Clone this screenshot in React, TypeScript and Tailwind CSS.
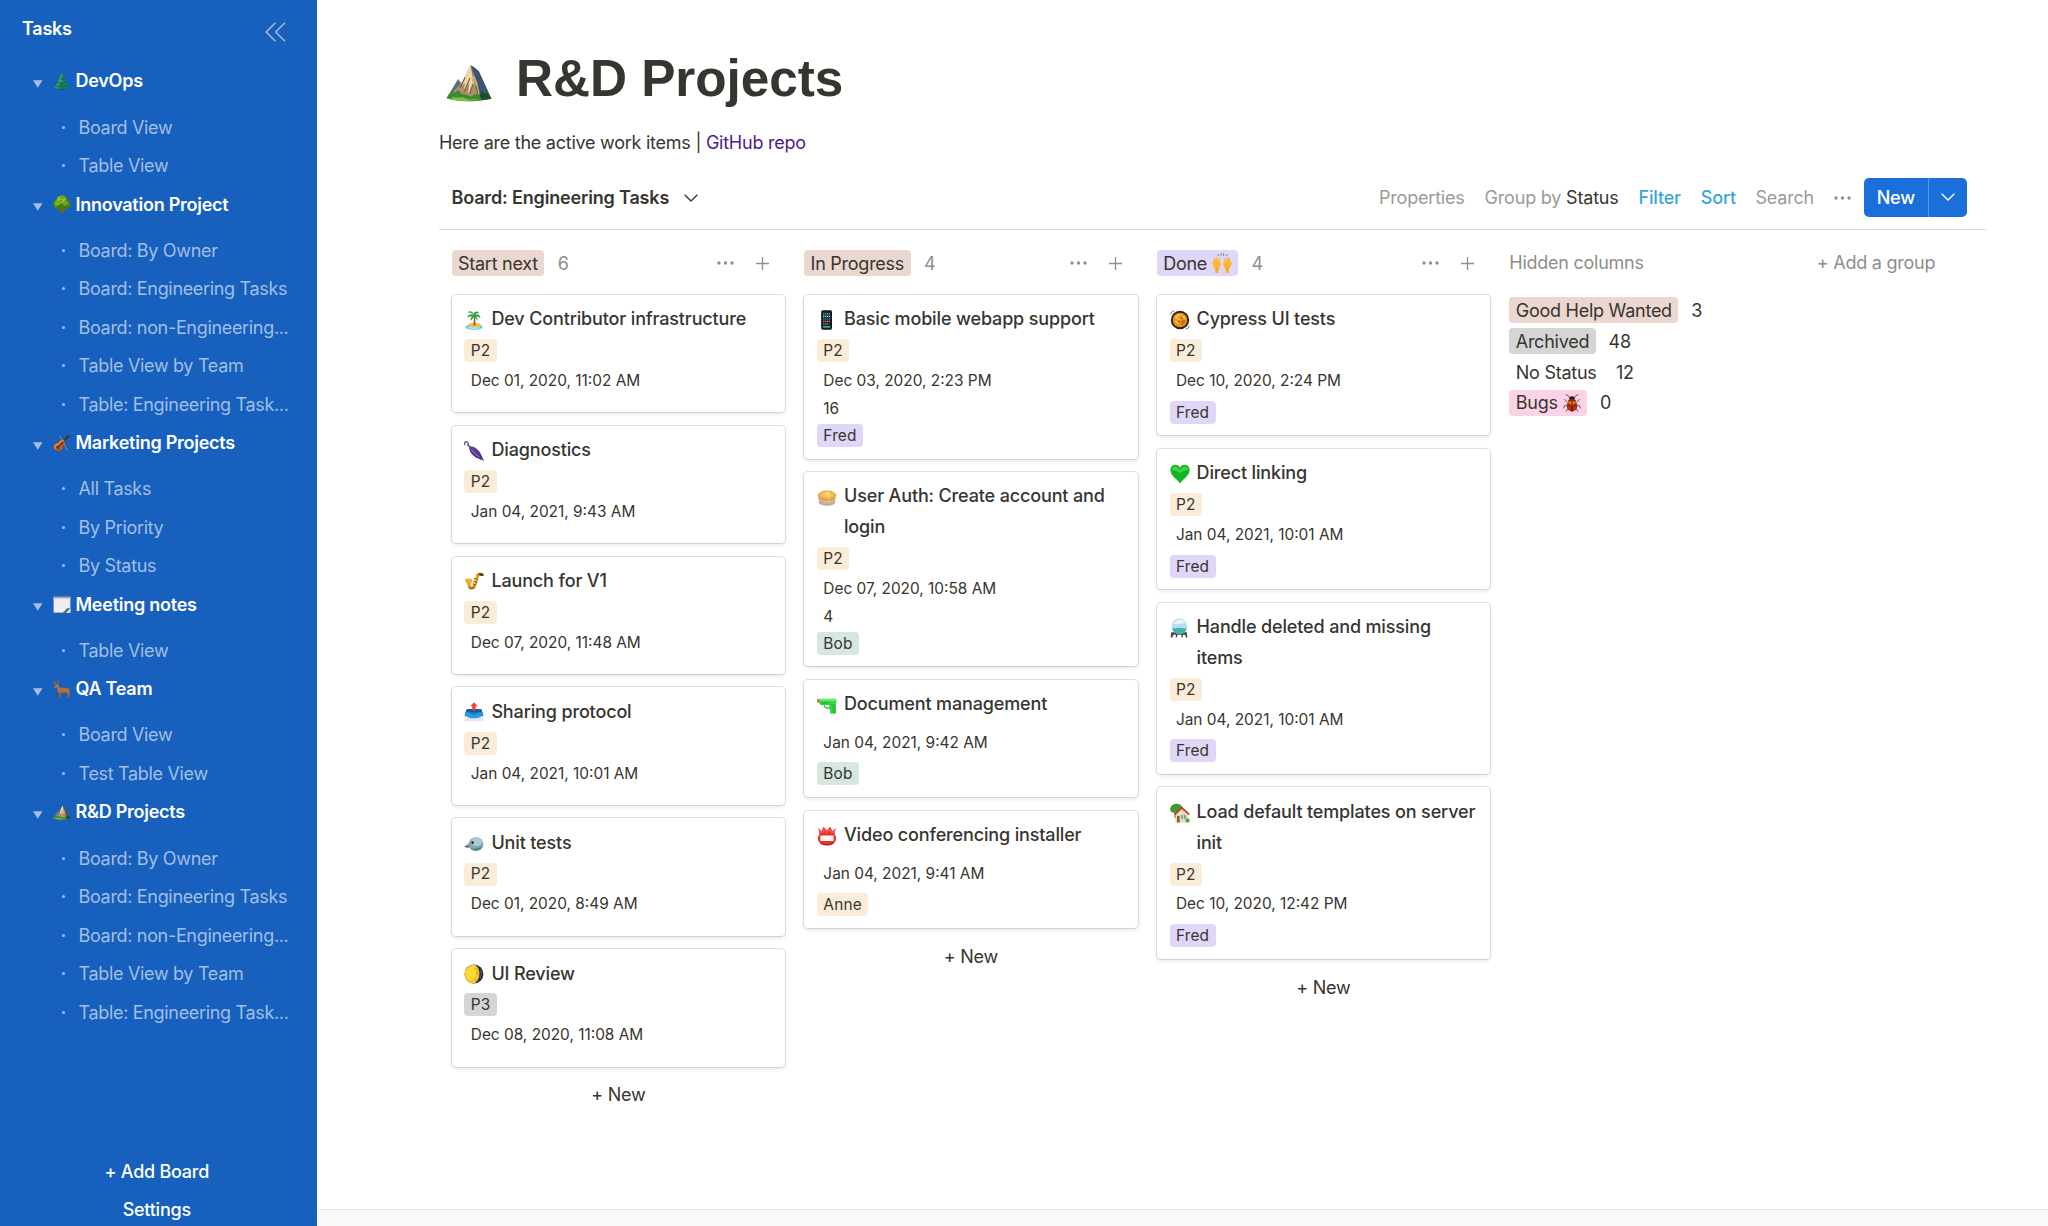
import React from "react";

type IconProps = { className?: string };

const Svg = ({ className = "", children }: React.PropsWithChildren<IconProps>) => (
  <svg viewBox="0 0 24 24" className={"block shrink-0 " + className} fill="none">
    {children}
  </svg>
);

const Pine = (p: IconProps) => (
  <Svg {...p}>
    <path d="M10.500 19.500h3v4.200h-3z" fill="#4a2d18" />
    <path d="M12 .3 8.300 7l1.200-.1-3.300 5.600 1.200-.1-3.200 5 1-.1L1.500 21.500c3.500 1 7 .8 10.500.8s7 .2 10.500-.8L18.800 17.300l1 .1-3.200-5 1.200.1L14.500 6.900l1.200.1z" fill="#178257" />
    <path d="M12 .3 8.300 7l1.200-.1-3.300 5.600 1.200-.1-3.200 5 1-.1L1.500 21.500l4.500.6L12 12z" fill="#33a06a" />
    <path d="m9 8.500 3 1.300 3-1M7 14l5 1.500 4.500-2M4.500 19.500 9 18l3 1.800 4-1.600 3.500 1.600" stroke="#0d5540" strokeWidth="1" />
  </Svg>
);

const RoundTree = (p: IconProps) => (
  <Svg {...p}>
    <path d="M10.300 16h3.400l.8 8h-5z" fill="#8a5826" />
    <circle cx="12" cy="7.500" r="7.300" fill="#5a9a14" />
    <circle cx="6.500" cy="12" r="6" fill="#4f8f10" />
    <circle cx="17.500" cy="12" r="6" fill="#47830e" />
    <ellipse cx="12" cy="16" rx="7.500" ry="4.500" fill="#447d0d" />
    <ellipse cx="11" cy="6.500" rx="6" ry="4.800" fill="#8cc126" />
    <circle cx="6" cy="11" r="3.600" fill="#79b01e" />
    <circle cx="16.500" cy="11" r="3.500" fill="#6da41a" />
    <path d="M6 15c2-2 3 1 5-1m2 3c1-2 3 0 5-3M8 9c1-1.500 2.500 0 4-1.500M10 4c1-1 2 .5 4-.5" stroke="#2f660b" strokeWidth="1" />
  </Svg>
);

const Violin = (p: IconProps) => (
  <Svg {...p}>
    <path d="M9 2.500 19.500 22" stroke="#a58f83" strokeWidth="1.100" />
    <path d="m13 11 8-8.500" stroke="#3d2a22" strokeWidth="2.200" />
    <path d="m20 1.500 2.500 2.200" stroke="#5b3726" strokeWidth="1.800" />
    <path d="M9.500 8.500c2-1.500 4.500-1.200 5.700.2s1 3.300-.4 4.800c-1.300 1.400-1 2.200-1.200 3.800-.3 3-4 5.200-7.600 5S.6 19.600 1 16.800c.4-2.900 2.600-4.200 4.800-4.500 2.500-.3 1.700-2.300 3.700-3.800z" fill="#c0561f" />
    <path d="M9.500 8.500c2-1.500 4.500-1.200 5.700.2l-12 11.500C1.500 19.500.7 18.500 1 16.800c.4-2.900 2.600-4.200 4.800-4.500 2.500-.3 1.700-2.300 3.700-3.800z" fill="#dd7b35" />
    <path d="m5 19 8.500-8.500" stroke="#4b2313" strokeWidth="1.500" />
    <path d="m4.500 16.500 3 3" stroke="#33180d" strokeWidth="1.200" />
  </Svg>
);

const Notepad = (p: IconProps) => (
  <Svg {...p}>
    <path d="M.8 2.500h22.400v21H.8z" fill="#eceef2" />
    <path d="M.8 2.500h22.400v2.300H.8z" fill="#b9bec6" />
    <path d="M3 .8v3M6 .8v3M9 .8v3M12 .8v3M15 .8v3M18 .8v3M21 .8v3" stroke="#7c838e" strokeWidth="1.100" />
    <path d="M23.200 15.500c-1 2.800-2.700 2-5.200 2.500-1 2.500-2.500 3.500-5 5.500h4c3.500-1.500 5.500-4.500 6.200-8z" fill="#56645a" />
    <path d="M23.200 18 17.500 23.500h5.700z" fill="#dfe8f5" />
  </Svg>
);

const Deer = (p: IconProps) => (
  <Svg {...p}>
    <path d="M5 7C2.500 5 2.500 3 1.500 1M3 4 .8 3.500M6 6.500C6.500 4 5.500 2.500 7 .5M6.300 4l2-1.500" stroke="#a77347" strokeWidth="1.100" />
    <path d="M1.500 8.500 5 5.800l2.500.5 1.500 4c3 .6 8-.6 12 .7l1.800 3-1.300-.4c.3 2 1 3.400.2 5.400l-.5 4.500h-1.400l.1-4.500-2.600-2.700c-2.500.9-4 .7-6.300.3l-1.500 2.500.3 4.400H8.400l-.3-5c-2-2.500-2.300-5-2.800-8.500l-3.300.2z" fill="#b76c39" />
    <path d="m7.500 17-.8 6.500M17 17l.7 6.500" stroke="#7d4420" strokeWidth="1.400" />
  </Svg>
);

const Mountain = (p: IconProps) => (
  <Svg {...p}>
    <path d="m.3 20.500 6-10 2 2 4.500-9.200 4 3 6.900 14.500C16 22.500 8 22.500.3 20.500z" fill="#a88f6d" />
    <path d="m12.800 3.300 1.600.8 2.800 2.300 6.500 14.400-4.500.3-3-5-1-4.500z" fill="#3c566f" />
    <path d="m12.800 3.300-3.300 6.500L8 14l2-1.500-.8 4 3-4-.7 6 3-5.500z" fill="#f0d6a5" />
    <path d="m12.800 3.300 1.700 5-1 3 2 2 .5 4 1.800 2.500-1.300-7z" fill="#c9a57a" />
    <path d="m12.500 10-3 7M14 13l-1.500 5M10 9.500 7.500 15M15.500 14l1 4" stroke="#77603f" strokeWidth=".6" />
    <path d="m6.300 10.500-4 6.700 2-.7L7.500 13z" fill="#587184" />
    <path d="M.3 20.500c1-2.200 2-3.500 3-4l1.500 1 1.500-1.300 2 2 2.500.4 2 1 3-1.300 2.500.2 1.700-2 3.500 4.300C16 22.500 8 22.500.3 20.500z" fill="#3f8a2c" />
    <path d="M4 19.500c2 1.500 4-.5 6 1s5 0 7 .5l-6 1.100c-4 0-6-.4-9-1z" fill="#79c04a" />
    <path d="m17.500 19 1.500-2.500 1.200 1.500 1-.8 2.500 3.600-5 .6z" fill="#1d4a36" />
  </Svg>
);

const Island = (p: IconProps) => (
  <Svg {...p}>
    <ellipse cx="12" cy="20.500" rx="10.500" ry="3.300" fill="#46d5ee" />
    <ellipse cx="12" cy="21.200" rx="7" ry="1.600" fill="#9ef0f6" />
    <ellipse cx="12.500" cy="18.200" rx="8" ry="2.900" fill="#f5bd58" />
    <path d="M11.200 7c1 4 .5 8 0 11.500h2.400C14 14.500 13.500 10 12.600 6.500z" fill="#8d5a2f" />
    <path d="M12 6C8 4 5 5.500 3.800 9.500 6 7.800 8 7.500 10 8c-2 1-2.500 3-2 5 1.400-1 3-3 4-5.500 1 2 3 3 4 5.200.7-2 0-4-1.800-5 2 0 4 .6 5.600 2.300C19.500 6.500 16.500 4.500 13 5.500c1.500-1.500 3.500-2 5.500-1.500-2-3-5.500-3-7 .5C9.500 1 6.500 1 4.500 3c3-.5 5.500.8 7.500 3z" fill="#2f9e3f" />
  </Svg>
);

const Umbrella = (p: IconProps) => (
  <Svg {...p}>
    <path d="M4.500 5.500C6 3.500 4.500.8 2.500 1S-.2 3.500 1.500 4.500" stroke="#7655a8" strokeWidth="1.800" />
    <path d="m4.500 4.500 3 3" stroke="#4b3769" strokeWidth="1.600" />
    <path d="M6 6.500c3-.8 8 1 11.500 5 3 3.400 3.800 7 6 12-5-1.800-9-2.500-12.500-6C7.500 14 6.200 10 6 6.500z" fill="#6d46a4" />
    <path d="M7.500 7.500c3 3.500 9 6.500 16 16M7 9c1 5 6 9.500 14 13M11 7.500c4 3 7 7 10 12" stroke="#412368" strokeWidth="1.100" />
    <path d="M8.500 9.500c3 4 6 6.500 10 10" stroke="#a27fd2" strokeWidth="1" />
  </Svg>
);

const Sax = (p: IconProps) => (
  <Svg {...p}>
    <path d="M22 3c-3-1-5-.5-6 1.500L12.500 16.500c-1 3.500-6 3.500-6.200 0L6 12" stroke="#d8931a" strokeWidth="3.800" />
    <path d="M.8 9.500c2.500-2 6.500-2.300 9.500-.5L8.500 13.500c.5 2-1.500 4-4 2.500z" fill="#efaf2c" />
    <path d="m15 5-3.300 11" stroke="#ffd76a" strokeWidth="1.500" />
    <path d="m17.500 1.500 6 .5v2.800l-4.500-.7z" fill="#3d3226" />
    <path d="m12 7.500 5 1.500M11 11l5 1.500M10.500 14.500l4 1" stroke="#84510b" strokeWidth="1.100" />
    <path d="M5.500 18.500c2 2.200 5.500 1.800 7.500-.3" stroke="#875509" strokeWidth="1.200" />
  </Svg>
);

const Outbox = (p: IconProps) => (
  <Svg {...p}>
    <path d="M3 9h18l2.500 8H.5z" fill="#1f7fcb" />
    <path d="M3.500 8.500h17l1.500 4H2z" fill="#165d99" />
    <path d="M.5 16.500 3 18h18l2.500-1.500v6.700H.5z" fill="#e6e8eb" />
    <path d="M.8 12.500h6.400c.8 2.400 2.500 3.200 4.800 3.200s4-.8 4.800-3.200h6.400L20 18l-4 1.500H8L4 18z" fill="#2b9ae6" />
    <path d="m12 .3 4.500 4.900h-2.400V10H9.900V5.200H7.500z" fill="#f0433d" />
  </Svg>
);

const Bird = (p: IconProps) => (
  <Svg {...p}>
    <path d="M7.500 11 .8 15.500c-.5 1 .5 1.800 2 1.800l6 .7z" fill="#9ba6ad" />
    <path d="m1 15.800 7-.8.8 1.500-6 .8z" fill="#58646b" />
    <ellipse cx="14.500" cy="13.500" rx="8.700" ry="8.500" fill="#7fa8b0" />
    <ellipse cx="15.500" cy="10.500" rx="6.500" ry="5" fill="#a9cbd0" />
    <path d="M7.500 18c3 3 8 3.500 12 1l3-4c-3 3-10 5-15 3z" fill="#4f7d88" />
    <circle cx="10.500" cy="11.500" r="2.300" fill="#dce6e8" />
    <circle cx="10.300" cy="11.500" r="1.600" fill="#15191c" />
  </Svg>
);

const Moon = (p: IconProps) => (
  <Svg {...p}>
    <circle cx="12" cy="12" r="11.300" fill="#1f2d41" />
    <path d="M13.500.8C17 3.500 18.500 7.500 18.500 12s-2 8.500-6 11.300C6 23.500.7 18.500.7 12S6 .5 13.500.8z" fill="#fbc62b" />
    <path d="M11 1.500C5 3 2 7.500 2 12c0 3.500 1.500 6 3.500 8 3 0 8-3 8.500-8S13 3 11 1.500z" fill="#ffd935" />
    <path d="M14.500 5c-1 1-.5 2 .5 2.500M17 10c-2-1-2.500.5-1.500 2s2.500.7 3 0M12.500 18c.5 1.500 1.500 2 3 1" stroke="#d5961b" strokeWidth="1" />
    <path d="M20 7c1 3 .8 7-.5 10" stroke="#51617a" strokeWidth="1.200" />
  </Svg>
);

const Phone = (p: IconProps) => (
  <Svg {...p}>
    <rect x="5" y=".3" width="13" height="23.400" rx="2" fill="#101317" />
    <rect x="6.500" y="1.800" width="10" height="20.400" rx="1" fill="#122b38" />
    <path d="M7.300 4.500h8.400" stroke="#3dbd72" strokeWidth="1.500" strokeDasharray="1.500 .8" />
    <path d="M7.300 7.500h8.400" stroke="#d8dce0" strokeWidth="1.500" strokeDasharray="1.500 .8" />
    <path d="M7.300 10.500h8.400" stroke="#4e7bd9" strokeWidth="1.500" strokeDasharray="1.500 .8" />
    <path d="M7.300 13.500h8.400" stroke="#e0713f" strokeWidth="1.500" strokeDasharray="1.500 .8" />
    <path d="M7.300 16.500h6" stroke="#b55bce" strokeWidth="1.500" strokeDasharray="1.500 .8" />
    <path d="M7.300 20.300h8.400" stroke="#37b183" strokeWidth="2" />
  </Svg>
);

const Pancakes = (p: IconProps) => (
  <Svg {...p}>
    <ellipse cx="12" cy="18" rx="10" ry="4.500" fill="#b9aaa0" />
    <path d="M1 10h22l-1.500 7c-2 4.500-17 4.500-19 0z" fill="#e6cba0" />
    <path d="M1.500 13.500c4 4 17 4 21 0M2.300 16.500c4 3.800 15.500 3.800 19.400 0" stroke="#b88f5c" strokeWidth="1" />
    <ellipse cx="12" cy="10" rx="11" ry="5.800" fill="#dc9c4a" />
    <ellipse cx="12" cy="9.400" rx="9.700" ry="4.700" fill="#f3b954" />
    <path d="M7 8.500c2-2 8-2.500 10 0 1 2-1 3-2 3.500l.5 4c0 1-1.500 1-1.500 0l-.7-3.500C10 13 6 11 7 8.500z" fill="#f8cf58" />
    <path d="m10 7 3.500-.7 1.500 1.500-3.500 1z" fill="#fff0a0" />
  </Svg>
);

const WaterGun = (p: IconProps) => (
  <Svg {...p}>
    <path d="M2.500 4.500h20l1 2.500-1 4.500.5 11h-7L14.500 12H4L2.500 9.500z" fill="#35d64a" />
    <path d="M3 5h19.500l.6 2H3z" fill="#7af07a" />
    <path d="M0 5h2.800v4H0z" fill="#c9703a" />
    <path d="M8.500 12c.5 3.500 3.500 4.500 7 3.500" stroke="#27b23b" strokeWidth="1.500" />
    <path d="M5 9.500h9M17 12h5" stroke="#1c9c33" strokeWidth="1" />
    <path d="m18 14 1 7h3.500l-.5-8z" fill="#2bc13f" />
  </Svg>
);

const NameBadge = (p: IconProps) => (
  <Svg {...p}>
    <path d="M3 10 1.500 2.500 5.500 6 8 1l3.800 4.500L15.800 1l2.700 5 4-3.500L21 10c1.500 2 2 3.500 2 5 0 5-5 8.500-11 8.500S1 20 1 15c0-1.500.5-3 2-5z" fill="#e5352c" />
    <path d="M4 8 3 5l3.500 3L8.500 4l3.400 4 3.600-4 2.300 4L21 5l-1 3" stroke="#ff8178" strokeWidth="1" />
    <rect x="4" y="11.500" width="16" height="6.500" rx="1" fill="#f9f5f3" />
    <path d="M4 20.500c4 2.500 12 2.500 16 0" stroke="#a91713" strokeWidth="1.200" />
  </Svg>
);

const Hands = (p: IconProps) => (
  <Svg {...p}>
    <path d="M7 1.800 8 4M11 .5v2.700M14 .5v2.700M18 1.800 17 4" stroke="#7b6d78" strokeWidth="1.200" />
    <path d="M1 14.500c-.8-2.500-.6-4.500.2-5l1 2.500-.3-5.500c.2-1.500 1.500-1 1.700.3l.6 3.300.3-4.300c.2-1.300 1.600-1.200 1.800 0l.4 4.500 1-3.300c.5-1.300 1.900-.7 1.700.5l-.6 4.700c.7-1.200 2.200-.7 2 .5-.4 2.300-1.500 4.800-3.500 6.300l.5 5H3.600l.3-5C2.400 17.500 1.500 16 1 14.500z" fill="#fdb724" />
    <path d="M23 14.500c.8-2.500.6-4.500-.2-5l-1 2.500.3-5.500c-.2-1.500-1.500-1-1.700.3l-.6 3.300-.3-4.300c-.2-1.300-1.600-1.200-1.800 0l-.4 4.500-1-3.300c-.5-1.300-1.900-.7-1.700.5l.6 4.700c-.7-1.200-2.200-.7-2 .5.400 2.300 1.500 4.800 3.500 6.300l-.5 5h4.200l-.3-5c1.500-1.500 2.400-3 2.900-4.500z" fill="#fdb724" />
    <path d="M4 19.500h4M16 19.500h4" stroke="#e6922a" strokeWidth="1.400" />
  </Svg>
);

const Paella = (p: IconProps) => (
  <Svg {...p}>
    <path d="M1 5.500C1 3 2.500 1.500 5 1.200M23 18.500c0 2.500-1.500 4-4 4.300" stroke="#706c68" strokeWidth="1.200" />
    <circle cx="12" cy="12" r="11" fill="#242120" />
    <circle cx="12" cy="12" r="8.800" fill="#e8921a" />
    <path d="M6 8c2-3 6-4 9-2.500-1 2-4 1-5 3.500S6.500 12 6 8z" fill="#f8bd3b" />
    <path d="M14 13c1.500-1.500 4-1 4.500.5-1 3-2.500 4.500-5 4.500.5-2-.5-3 .5-5z" fill="#d9601a" />
    <path d="M6 14c2-1 3 1 4 3M15 7l3 3M9 12l3-1" stroke="#ffdf6e" strokeWidth="1.500" />
    <circle cx="10.500" cy="14" r="1" fill="#a3440f" />
    <circle cx="14" cy="9.500" r="1" fill="#c9540f" />
  </Svg>
);

const GreenHeart = (p: IconProps) => (
  <Svg {...p}>
    <path d="M12 23.500C10 19 .5 14.500.5 7.500.5 3.500 3 1 6.300 1 9 1 11 2.500 12 4.500 13 2.500 15 1 17.700 1c3.300 0 5.800 2.500 5.800 6.500 0 7-9.500 11.500-11.500 16z" fill="#13b521" />
    <path d="M2.500 6.500c.5-2.700 3-4 5-3.200 2 .7 3.500 2.700 4.500 4.200 1-1.500 2.500-3.500 4.500-4.200 2-.8 4.500.5 5 3.200-2 1-5 1-9.500 4.500-4.500-3.500-7.500-3.500-9.500-4.500z" fill="#3fd345" />
  </Svg>
);

const CrystalBall = (p: IconProps) => (
  <Svg {...p}>
    <path d="M1.500 17h18.500l1 6.500h-1.800l-1-3.500h-3l.5 3.500h-1.500l-.8-3.500H9l-.8 3.500H6.700l.5-3.500H4l-1 3.500H.7z" fill="#4a4245" />
    <circle cx="11.300" cy="9.800" r="9.300" fill="#b5dcf1" />
    <path d="M2.500 13c4-1.500 13-1.500 17.600 0-1 3.500-3.800 6.100-8.800 6.100S3.500 16.500 2.500 13z" fill="#3ab3ab" />
    <path d="M4 7c1.500-3 4-5 8-5 3 0 5.500 1.700 6.800 4.500C14 5 9 9 4 7z" fill="#eaf6fd" />
  </Svg>
);

const HouseTree = (p: IconProps) => (
  <Svg {...p}>
    <path d="M5.500 10h2v8h-2z" fill="#7b4b24" />
    <path d="M7.500.8c3 0 5 1 6 2.500C15.500 4 15 7 13.500 8.500 11 12 4 12.500 1.500 10.500-.5 8.500 0 5.500 1.500 4 2.500 2 5 .8 7.500.8z" fill="#3f9a2e" />
    <path d="M6.500 13 14 6l8 7.500v10H6.500z" fill="#efdcb6" />
    <path d="m5.500 14 8.700-8.300 9 8.300" stroke="#c93f31" strokeWidth="2.200" />
    <path d="M8.500 15.500h3v8h-3z" fill="#8c522c" />
    <path d="M13.500 14.500h5.500v4.500h-5.500z" fill="#5d9dc4" />
    <path d="M16.200 14.500V19" stroke="#fff" strokeWidth=".8" />
    <circle cx="21" cy="21" r="2.600" fill="#58ad2f" />
  </Svg>
);

const Beetle = (p: IconProps) => (
  <Svg {...p}>
    <path d="M9 5 6 1.500 3.500 1M15 5l3-3.500 2.500-.5M6 11 2 7M18 11l4-4M5 15.500H2L1 19M19 15.500h3l1 3.500M7 19l-3 4.500M17 19l3 4.500" stroke="#4b3a35" strokeWidth="1.100" />
    <path d="M8 6.500C8 4.500 9.500 3 12 3s4 1.500 4 3.500z" fill="#2b1c18" />
    <path d="M7 9c1.500-3.500 8.500-3.500 10 0l-1 2.500H8z" fill="#5a2b13" />
    <ellipse cx="12" cy="15.500" rx="7" ry="7.800" fill="#a82410" />
    <path d="M6.500 11c2-2 9-2 11 0-1.500 2-4 2-5.500 6-1.500-4-4-4-5.500-6z" fill="#e08a2a" />
    <path d="M12 9.500v13.800" stroke="#3d0d08" strokeWidth="1.300" />
    <path d="M8 17c.5 2 1.500 3 2.500 3.500M16 17c-.5 2-1.500 3-2.500 3.500" stroke="#e2602a" strokeWidth="1.200" />
  </Svg>
);

type Icon = (p: IconProps) => React.ReactElement;

const boards: { icon: Icon; name: string; views: string[] }[] = [
  { icon: Pine, name: "DevOps", views: ["Board View", "Table View"] },
  {
    icon: RoundTree,
    name: "Innovation Project",
    views: ["Board: By Owner", "Board: Engineering Tasks", "Board: non-Engineering...", "Table View by Team", "Table: Engineering Task..."],
  },
  { icon: Violin, name: "Marketing Projects", views: ["All Tasks", "By Priority", "By Status"] },
  { icon: Notepad, name: "Meeting notes", views: ["Table View"] },
  { icon: Deer, name: "QA Team", views: ["Board View", "Test Table View"] },
  {
    icon: Mountain,
    name: "R&D Projects",
    views: ["Board: By Owner", "Board: Engineering Tasks", "Board: non-Engineering...", "Table View by Team", "Table: Engineering Task..."],
  },
];

const personColor: Record<string, string> = {
  Fred: "bg-[#e0d6f8]",
  Bob: "bg-[#d6e6e1]",
  Anne: "bg-[#fbecd9]",
};

const priorityColor: Record<string, string> = {
  P2: "bg-[#fbecd9]",
  P3: "bg-[#d5d5d5]",
};

type Task = { icon: Icon; title: string[]; priority?: string; date: string; estimate?: string; person?: string };

const columns: { name: string; icon?: Icon; color: string; count: number; tasks: Task[] }[] = [
  {
    name: "Start next",
    color: "bg-[#ead7d0]",
    count: 6,
    tasks: [
      { icon: Island, title: ["Dev Contributor infrastructure"], priority: "P2", date: "Dec 01, 2020, 11:02 AM" },
      { icon: Umbrella, title: ["Diagnostics"], priority: "P2", date: "Jan 04, 2021, 9:43 AM" },
      { icon: Sax, title: ["Launch for V1"], priority: "P2", date: "Dec 07, 2020, 11:48 AM" },
      { icon: Outbox, title: ["Sharing protocol"], priority: "P2", date: "Jan 04, 2021, 10:01 AM" },
      { icon: Bird, title: ["Unit tests"], priority: "P2", date: "Dec 01, 2020, 8:49 AM" },
      { icon: Moon, title: ["UI Review"], priority: "P3", date: "Dec 08, 2020, 11:08 AM" },
    ],
  },
  {
    name: "In Progress",
    color: "bg-[#ead7d0]",
    count: 4,
    tasks: [
      { icon: Phone, title: ["Basic mobile webapp support"], priority: "P2", date: "Dec 03, 2020, 2:23 PM", estimate: "16", person: "Fred" },
      { icon: Pancakes, title: ["User Auth: Create account and", "login"], priority: "P2", date: "Dec 07, 2020, 10:58 AM", estimate: "4", person: "Bob" },
      { icon: WaterGun, title: ["Document management"], date: "Jan 04, 2021, 9:42 AM", person: "Bob" },
      { icon: NameBadge, title: ["Video conferencing installer"], date: "Jan 04, 2021, 9:41 AM", person: "Anne" },
    ],
  },
  {
    name: "Done",
    icon: Hands,
    color: "bg-[#e0d6f8]",
    count: 4,
    tasks: [
      { icon: Paella, title: ["Cypress UI tests"], priority: "P2", date: "Dec 10, 2020, 2:24 PM", person: "Fred" },
      { icon: GreenHeart, title: ["Direct linking"], priority: "P2", date: "Jan 04, 2021, 10:01 AM", person: "Fred" },
      { icon: CrystalBall, title: ["Handle deleted and missing", "items"], priority: "P2", date: "Jan 04, 2021, 10:01 AM", person: "Fred" },
      { icon: HouseTree, title: ["Load default templates on server", "init"], priority: "P2", date: "Dec 10, 2020, 12:42 PM", person: "Fred" },
    ],
  },
];

const hidden: { name: string; icon?: Icon; color: string; count: number }[] = [
  { name: "Good Help Wanted", color: "bg-[#ead7d0]", count: 3 },
  { name: "Archived", color: "bg-[#d5d5d5]", count: 48 },
  { name: "No Status", color: "", count: 12 },
  { name: "Bugs", icon: Beetle, color: "bg-[#fad3e6]", count: 0 },
];

function Dots() {
  return (
    <svg viewBox="0 0 17 4" className="block h-[4px] w-[17px] fill-[#8f8e8b]">
      <circle cx="2" cy="2" r="1.700" />
      <circle cx="8.500" cy="2" r="1.700" />
      <circle cx="15" cy="2" r="1.700" />
    </svg>
  );
}

function ChevronDown({ className }: IconProps) {
  return (
    <svg viewBox="0 0 14 8" className={"block h-[8px] w-[14px] " + className} fill="none" strokeWidth="1.300">
      <path d="m.7.7 6.300 6.300 6.300-6.300" />
    </svg>
  );
}

function Badge({ color, children }: React.PropsWithChildren<{ color: string }>) {
  return (
    <span className={"flex h-[25.700px] items-center rounded-[4px] px-[6.400px] " + color}>{children}</span>
  );
}

function Chip({ color, children }: React.PropsWithChildren<{ color: string }>) {
  return (
    <div className="flex h-[30.800px] items-center tracking-[0.01em]">
      <span className={"flex h-[23px] items-center rounded-[4px] px-[6.400px] " + color}>{children}</span>
    </div>
  );
}

function Card({ task }: { task: Task }) {
  const TaskIcon = task.icon;
  return (
    <div className="rounded-[4px] bg-white pt-[9.600px] pb-[7.900px] pl-[12.800px] text-[15.400px] tracking-[0em] shadow-[0_0_0_1px_rgba(15,15,15,0.12),0_2px_4px_rgba(15,15,15,0.1)]">
      <div className="flex text-[18px] leading-[30.800px] font-medium tracking-[-0.008em]">
        <TaskIcon className="mt-[5.500px] mr-[7px] size-[20px]" />
        <div>
          {task.title.map((line) => (
            <div key={line}>{line}</div>
          ))}
        </div>
      </div>
      {task.priority ? <Chip color={priorityColor[task.priority]}>{task.priority}</Chip> : <div className="h-[7.700px]" />}
      <div className="pl-[6.400px] leading-[30.800px]">{task.date}</div>
      {task.estimate && <div className="pl-[6.400px] leading-[23.100px]">{task.estimate}</div>}
      {task.person ? <Chip color={personColor[task.person]}>{task.person}</Chip> : <div className="h-[7.700px]" />}
    </div>
  );
}

function Sidebar() {
  return (
    <aside className="flex h-full w-[316.500px] shrink-0 flex-col bg-[#1760bd] text-white">
      <div className="flex h-[61.700px] justify-between pr-[31px] pl-[22px]">
        <span className="h-[58px] text-[18px] leading-[58px] font-semibold">Tasks</span>
        <svg viewBox="0 0 21 20" className="mt-[22px] h-[20px] w-[21px] stroke-[#a2bfe5]" fill="none" strokeWidth="1.500">
          <path d="M10.500.7 1.200 10l9.300 9.300M20 .7 10.700 10l9.300 9.300" />
        </svg>
      </div>
      {boards.map(({ icon: BoardIcon, name, views }) => (
        <div key={name}>
          <div className="mb-[7.600px] flex h-[38.500px] items-center pl-[33px] text-[18px] font-semibold">
            <svg viewBox="0 0 10 8" className="mt-[6px] mr-[10px] block h-[8px] w-[9.500px] fill-[#a2bfe5]">
              <path d="M0 0h10L5 8z" />
            </svg>
            <BoardIcon className="mr-[5px] size-[18px]" />
            <span>{name}</span>
          </div>
          {views.map((view) => (
            <div key={view} className="flex h-[38.500px] items-center pl-[61.500px] text-[18px] tracking-[-0.018em] text-[#a2bfe5]">
              <span className="mr-[14px] size-[3px] rounded-full bg-[#a2bfe5]" />
              <span>{view}</span>
            </div>
          ))}
        </div>
      ))}
      <div className="mt-auto mb-[-3.500px] text-center text-[18px] leading-[38.500px] font-medium">
        <div className="pr-[3px]">+ Add Board</div>
        <div className="pr-[3px]">Settings</div>
      </div>
    </aside>
  );
}

export default function App() {
  return (
    <div className="flex h-[1226px] w-[2048px] overflow-hidden bg-white font-['Inter',sans-serif] text-[18px] tracking-[-0.014em] whitespace-nowrap text-[#37352f]">
      <Sidebar />
      <div className="flex flex-1 flex-col">
        <main className="flex h-[1208.500px] flex-col pl-[122.500px]">
          <div className="mt-[46px] flex h-[64px] items-center pl-[7px]">
            <Mountain className="mt-[8px] mr-[24px] size-[46px]" />
            <h1 className="pt-[2px] font-['Liberation_Sans',sans-serif] text-[51.300px] leading-[64px] font-bold tracking-[-0.001em]">
              R&amp;D Projects
            </h1>
          </div>
          <p className="mt-[17.700px] h-[38.300px] leading-[30px]">
            Here are the active work items | <a className="text-[#4b1d88]">GitHub repo</a>
          </p>
          <div className="flex h-[64.300px] w-[1547px] items-center border-b border-[#dcdcdb] pr-[19px] pl-[12.500px]">
            <span className="font-semibold tracking-[-0.009em]">Board: Engineering Tasks</span>
            <ChevronDown className="ml-[15px] stroke-[#37352f]" />
            <div className="ml-auto flex items-center tracking-[-0.011em] text-[#9b9a97]">
              <span>Properties</span>
              <span className="ml-[20px]">
                Group by <span className="text-[#37352f]">Status</span>
              </span>
              <span className="ml-[20px] font-medium text-[#3aa5d8]">Filter</span>
              <span className="ml-[20px] font-medium text-[#3aa5d8]">Sort</span>
              <span className="ml-[19.500px]">Search</span>
              <span className="mr-[13px] ml-[20px]">
                <Dots />
              </span>
              <div className="flex h-[38.500px] w-[103px] overflow-hidden rounded-[5px] bg-[#1b6fdb] font-medium text-white">
                <span className="flex w-[64.500px] items-center justify-center border-r border-[#5b97e6]">New</span>
                <span className="flex flex-1 items-center justify-center">
                  <ChevronDown className="mb-[2px] stroke-white" />
                </span>
              </div>
            </div>
          </div>
          <div className="flex pl-[12.600px]">
            {columns.map(({ name, icon: ColumnIcon, color, count, tasks }) => (
              <section key={name} className="mr-[19.200px] w-[333.400px]">
                <div className="flex h-[64.500px] items-center pt-[1px]">
                  <Badge color={color}>
                    {name}
                    {ColumnIcon && <ColumnIcon className="ml-[4.500px] size-[20px]" />}
                  </Badge>
                  <span className="ml-[13.500px] text-[#8f8e8b]">{count}</span>
                  <div className="ml-auto flex items-center pr-[16px]">
                    <Dots />
                    <svg viewBox="0 0 13 13" className="ml-[22px] block size-[13px] stroke-[#8f8e8b]" strokeWidth="1.300">
                      <path d="M6.500 0v13M0 6.500h13" />
                    </svg>
                  </div>
                </div>
                <div className="flex flex-col gap-[13.300px]">
                  {tasks.map((task) => (
                    <Card key={task.title[0]} task={task} />
                  ))}
                </div>
                <div className="mt-[9.800px] text-center leading-[38.500px]">+ New</div>
              </section>
            ))}
            <section className="w-[307.500px]">
              <div className="h-[64.500px] pt-[1px] leading-[64px] text-[#8f8e8b]">Hidden columns</div>
              {hidden.map(({ name, icon: HiddenIcon, color, count }) => (
                <div key={name} className="flex h-[30.900px] items-center">
                  <Badge color={color}>
                    {name}
                    {HiddenIcon && <HiddenIcon className="ml-[5px] size-[18px]" />}
                  </Badge>
                  <span className="ml-[13px]">{count}</span>
                </div>
              ))}
            </section>
            <div className="h-[64.500px] pt-[1px] leading-[64px] text-[#8f8e8b]">+ Add a group</div>
          </div>
        </main>
        <div className="flex-1 border-t border-[#e6e6e6] bg-[#f9f9f9]" />
      </div>
    </div>
  );
}
